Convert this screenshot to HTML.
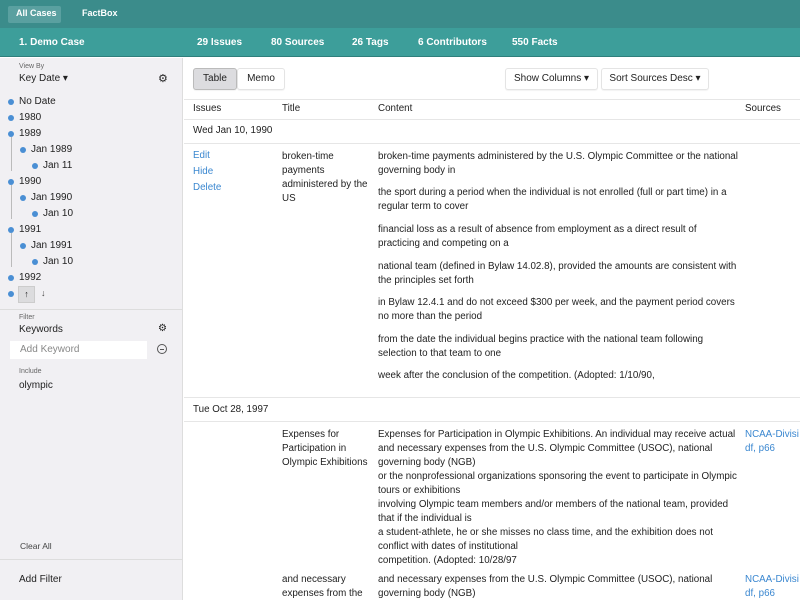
<!DOCTYPE html>
<html><head><style>
*{margin:0;padding:0;box-sizing:border-box}
body{width:800px;height:600px;overflow:hidden;font-family:"Liberation Sans",sans-serif;font-size:10px;color:#222;background:#fff;position:relative}
.a{position:absolute;white-space:nowrap}
.top{position:absolute;left:0;top:0;width:800px;height:28px;background:#3b8c8b}
.bar{position:absolute;left:0;top:28px;width:800px;height:29px;background:#3d9e9a;border-bottom:1px solid #2f7f7c}
.w{color:#fff;font-weight:bold;font-size:10px}
.side{position:absolute;left:0;top:58px;width:183px;height:542px;background:#f1f0f3;border-right:1px solid #ddd}
.dot{position:absolute;width:6px;height:6px;border-radius:50%;background:#4a8fd4}
.vl{position:absolute;width:1px;background:#bbb}
.btn{position:absolute;background:#fff;border:1px solid #e4e4e4;border-radius:3px;font-size:10px;text-align:center;line-height:20px;box-shadow:0 1px 1px rgba(0,0,0,.05)}
.c{font-size:9.8px;color:#222}
.l{color:#3a87d0}
.hr{position:absolute;height:1px;background:#e6e6e6}
</style></head><body>
<div class="top"></div>
<div class="a" style="left:8px;top:6px;width:53px;height:17px;background:#5aa0a0;border-radius:2px"></div>
<div class="a w" style="left:16px;top:8px;font-size:9px">All Cases</div>
<div class="a w" style="left:82px;top:8px;font-size:9px">FactBox</div>
<div class="bar"></div>
<div class="a w" style="left:19px;top:37px">1. Demo Case</div>
<div class="a w" style="left:197px;top:37px">29 Issues</div>
<div class="a w" style="left:271px;top:37px">80 Sources</div>
<div class="a w" style="left:352px;top:37px">26 Tags</div>
<div class="a w" style="left:418px;top:37px">6 Contributors</div>
<div class="a w" style="left:512px;top:37px">550 Facts</div>

<div class="side"></div>
<div class="a" style="left:19px;top:63px;font-size:7px;color:#666">View By</div>
<div class="a" style="left:19px;top:73px;font-size:10px">Key Date ▾</div>
<div class="a" style="left:158px;top:72px;font-size:11px">⚙</div>
<div class="dot" style="left:8px;top:99px"></div><div class="a" style="left:19px;top:96px">No Date</div>
<div class="dot" style="left:8px;top:115px"></div><div class="a" style="left:19px;top:112px">1980</div>
<div class="dot" style="left:8px;top:131px"></div><div class="a" style="left:19px;top:128px">1989</div>
<div class="vl" style="left:11px;top:137px;height:34px"></div>
<div class="dot" style="left:20px;top:147px"></div><div class="a" style="left:31px;top:144px">Jan 1989</div>
<div class="dot" style="left:32px;top:163px"></div><div class="a" style="left:43px;top:160px">Jan 11</div>
<div class="dot" style="left:8px;top:179px"></div><div class="a" style="left:19px;top:176px">1990</div>
<div class="vl" style="left:11px;top:185px;height:34px"></div>
<div class="dot" style="left:20px;top:195px"></div><div class="a" style="left:31px;top:192px">Jan 1990</div>
<div class="dot" style="left:32px;top:211px"></div><div class="a" style="left:43px;top:208px">Jan 10</div>
<div class="dot" style="left:8px;top:227px"></div><div class="a" style="left:19px;top:224px">1991</div>
<div class="vl" style="left:11px;top:233px;height:34px"></div>
<div class="dot" style="left:20px;top:243px"></div><div class="a" style="left:31px;top:240px">Jan 1991</div>
<div class="dot" style="left:32px;top:259px"></div><div class="a" style="left:43px;top:256px">Jan 10</div>
<div class="dot" style="left:8px;top:275px"></div><div class="a" style="left:19px;top:272px">1992</div>
<div class="dot" style="left:8px;top:291px"></div>
<div class="a" style="left:18px;top:286px;width:17px;height:17px;background:#dcdcde;border:1px solid #ccc;font-size:9px;text-align:center;line-height:15px">↑</div>
<div class="a" style="left:41px;top:288px;font-size:9px;color:#444">↓</div>
<div class="hr" style="left:0;top:309px;width:183px;background:#ddd"></div>
<div class="a" style="left:19px;top:314px;font-size:7px;color:#666">Filter</div>
<div class="a" style="left:19px;top:324px;font-size:10px">Keywords</div>
<div class="a" style="left:158px;top:323px">⚙</div>
<div class="a" style="left:10px;top:341px;width:137px;height:18px;background:#fff"></div>
<div class="a" style="left:20px;top:344px;font-size:10px;color:#888">Add Keyword</div>
<div class="a" style="left:157px;top:344px;width:10px;height:10px;border:1px solid #555;border-radius:50%"></div>
<div class="a" style="left:160px;top:348.5px;width:4px;height:1px;background:#555"></div>
<div class="a" style="left:19px;top:368px;font-size:7px;color:#666">Include</div>
<div class="a" style="left:19px;top:380px;font-size:10px">olympic</div>
<div class="a" style="left:20px;top:541px;font-size:8.5px;color:#444">Clear All</div>
<div class="hr" style="left:0;top:559px;width:183px;background:#ddd"></div>
<div class="a" style="left:19px;top:574px;font-size:10px">Add Filter</div>

<div class="btn" style="left:193px;top:68px;width:44px;height:22px;background:#dcdcdf;border-color:#bbb">Table</div>
<div class="btn" style="left:237px;top:68px;width:48px;height:22px">Memo</div>
<div class="btn" style="left:505px;top:68px;width:93px;height:22px">Show Columns ▾</div>
<div class="btn" style="left:601px;top:68px;width:108px;height:22px">Sort Sources Desc ▾</div>
<div class="hr" style="left:184px;top:99px;width:616px"></div>
<div class="a c" style="left:193px;top:103px">Issues</div>
<div class="a c" style="left:282px;top:103px">Title</div>
<div class="a c" style="left:378px;top:103px">Content</div>
<div class="a c" style="left:745px;top:103px">Sources</div>
<div class="hr" style="left:184px;top:119px;width:616px"></div>
<div class="a c" style="left:193px;top:125px">Wed Jan 10, 1990</div>
<div class="hr" style="left:184px;top:143px;width:616px"></div>
<div class="a c l" style="left:193px;top:150px">Edit</div>
<div class="a c l" style="left:193px;top:166px">Hide</div>
<div class="a c l" style="left:193px;top:182px">Delete</div>
<div class="a c" style="left:282px;top:150px;line-height:14px">broken-time<br>payments<br>administered by the<br>US</div>
<div class="a c" style="left:378px;top:150px;line-height:14px">broken-time payments administered by the U.S. Olympic Committee or the national<br>governing body in</div>
<div class="a c" style="left:378px;top:186px;line-height:14px">the sport during a period when the individual is not enrolled (full or part time) in a<br>regular term to cover</div>
<div class="a c" style="left:378px;top:223px;line-height:14px">financial loss as a result of absence from employment as a direct result of<br>practicing and competing on a</div>
<div class="a c" style="left:378px;top:260px;line-height:14px">national team (defined in Bylaw 14.02.8), provided the amounts are consistent with<br>the principles set forth</div>
<div class="a c" style="left:378px;top:296px;line-height:14px">in Bylaw 12.4.1 and do not exceed $300 per week, and the payment period covers<br>no more than the period</div>
<div class="a c" style="left:378px;top:333px;line-height:14px">from the date the individual begins practice with the national team following<br>selection to that team to one</div>
<div class="a c" style="left:378px;top:370px">week after the conclusion of the competition. (Adopted: 1/10/90,</div>
<div class="hr" style="left:184px;top:397px;width:616px"></div>
<div class="a c" style="left:193px;top:404px">Tue Oct 28, 1997</div>
<div class="hr" style="left:184px;top:421px;width:616px"></div>
<div class="a c" style="left:282px;top:428px;line-height:14px">Expenses for<br>Participation in<br>Olympic Exhibitions</div>
<div class="a c" style="left:378px;top:428px;line-height:14px">Expenses for Participation in Olympic Exhibitions. An individual may receive actual<br>and necessary expenses from the U.S. Olympic Committee (USOC), national<br>governing body (NGB)<br>or the nonprofessional organizations sponsoring the event to participate in Olympic<br>tours or exhibitions<br>involving Olympic team members and/or members of the national team, provided<br>that if the individual is<br>a student-athlete, he or she misses no class time, and the exhibition does not<br>conflict with dates of institutional<br>competition. (Adopted: 10/28/97</div>
<div class="a c l" style="left:745px;top:428px;line-height:14px">NCAA-Divisi<br>df, p66</div>
<div class="a c" style="left:282px;top:573px;line-height:14px">and necessary<br>expenses from the</div>
<div class="a c" style="left:378px;top:573px;line-height:14px">and necessary expenses from the U.S. Olympic Committee (USOC), national<br>governing body (NGB)</div>
<div class="a c l" style="left:745px;top:573px;line-height:14px">NCAA-Divisi<br>df, p66</div>
</body></html>
